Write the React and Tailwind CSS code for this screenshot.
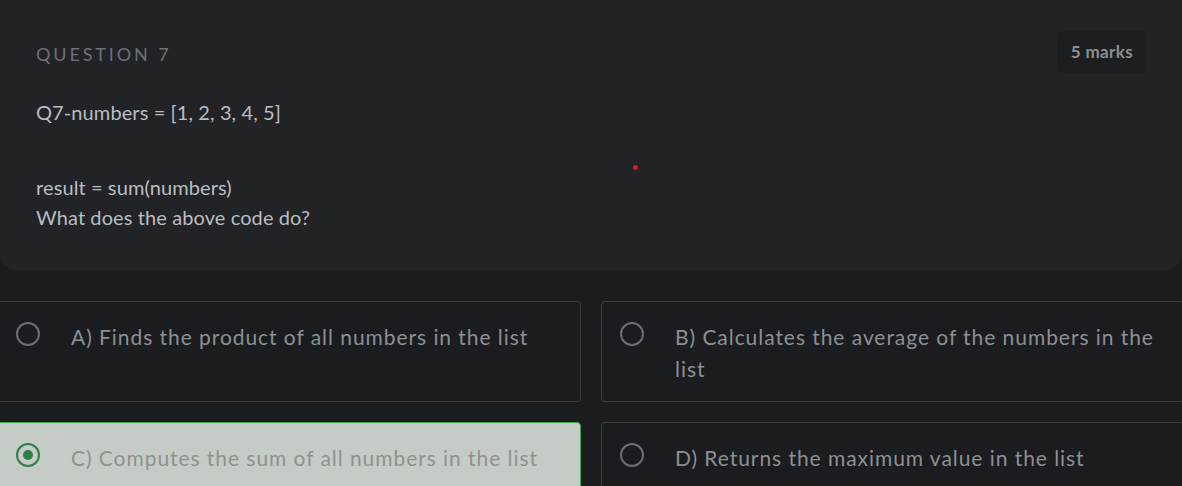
const OPTIONS = [
  { id: "A", text: "A) Finds the product of all numbers in the list" },
  { id: "B", text: "B) Calculates the average of the numbers in the list" },
  { id: "C", text: "C) Computes the sum of all numbers in the list", selected: true },
  { id: "D", text: "D) Returns the maximum value in the list" },
];

function Radio({ selected }) {
  if (selected) {
    return (
      <span className="mt-[1px] flex h-[24px] w-[24px] shrink-0 items-center justify-center rounded-full border-[2.5px] border-[#2f7d47]">
        <span className="h-[10px] w-[10px] rounded-full bg-[#2f7d47]" />
      </span>
    );
  }
  return <span className="mt-[1px] h-[24px] w-[24px] shrink-0 rounded-full border-2 border-[#6c6f73]" />;
}

function OptionCard({ option }) {
  const cls = option.selected
    ? "bg-[#c5ccc5] border-[#45a349] text-[#8e938e]"
    : "bg-[#1a1c1f] border-[#3c3f42] text-[#8c9094]";
  return (
    <div className={`flex h-[101px] items-start gap-[31px] rounded-[4px] border pl-[18px] pr-[20px] pt-[19px] ${cls}`}>
      <Radio selected={option.selected} />
      <p className="text-[21px] leading-[32px] tracking-[0.045em]">{option.text}</p>
    </div>
  );
}

export default function App() {
  return (
    <div className="h-[486px] w-[1182px] overflow-hidden bg-[#1a1c1f] font-['Lato',sans-serif]">
      <div className="relative h-[270px] rounded-b-[16px] bg-[#212326] px-9 pt-[40px]">
        <div className="flex items-start justify-between">
          <h2 className="mt-[1px] text-[18px] tracking-[0.16em] text-[#6e7175]">QUESTION 7</h2>
          <span className="-mt-[9px] mr-[-1px] rounded-[6px] bg-[#1c1e20] px-[14px] py-[10px] text-[17px] font-bold leading-[22px] tracking-[0.02em] text-[#8b8e91]">
            5 marks
          </span>
        </div>
        <div className="mt-[24px] text-[20px] leading-[30px] tracking-[0.005em] text-[#babdc1]">
          <p>Q7-numbers = [1, 2, 3, 4, 5]</p>
          <p className="mt-[45px]">result = sum(numbers)</p>
          <p>What does the above code do?</p>
        </div>
        <span className="absolute left-[633px] top-[165px] h-[5px] w-[5px] rounded-full bg-[#e01b1b]" />
      </div>
      <div className="-ml-[3px] mt-[31px] grid w-[1188px] grid-cols-2 gap-x-[20px] gap-y-[20px]">
        {OPTIONS.map((o) => (
          <OptionCard key={o.id} option={o} />
        ))}
      </div>
    </div>
  );
}
